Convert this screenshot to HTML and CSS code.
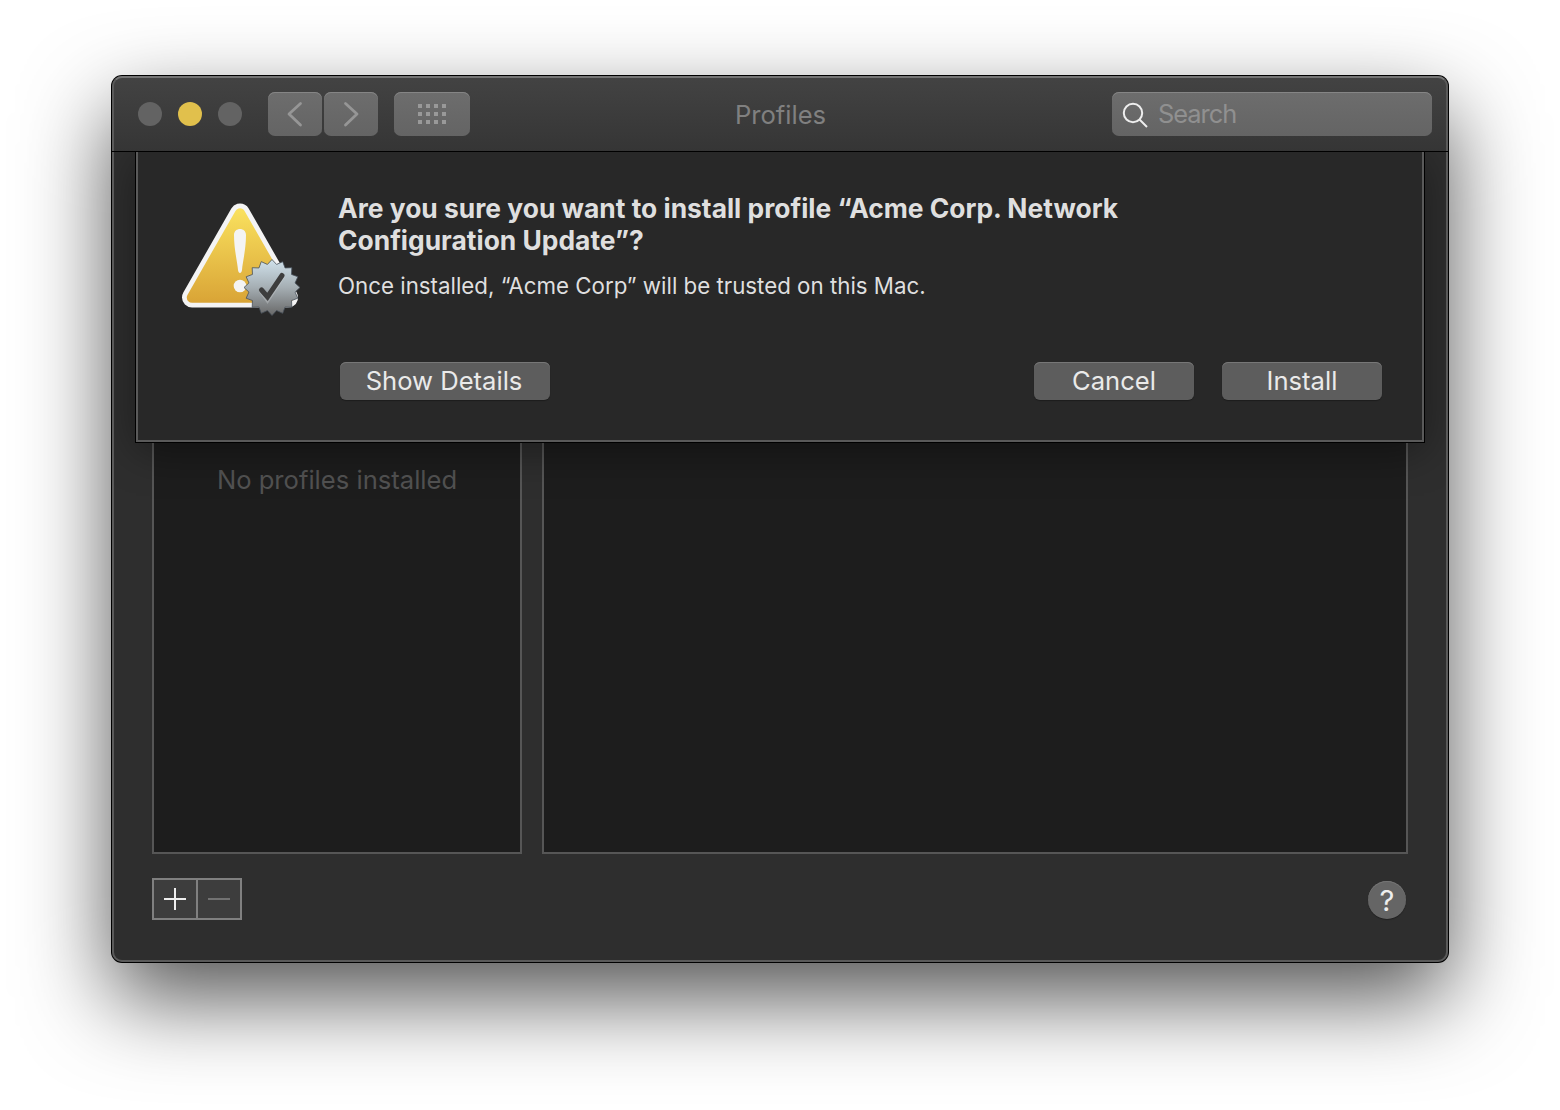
FILE: index.html
```html
<!DOCTYPE html>
<html lang="en">
<head>
<meta charset="utf-8">
<title>Profiles</title>
<link rel="stylesheet" href="styles.css">
</head>
<body>
<main class="window">
  <header class="titlebar">
    <div class="left-tools">
      <div class="lights"><span class="light"></span><span class="light light-yellow"></span><span class="light"></span></div>
      <div class="nav">
        <button class="tool" aria-label="Back"><svg width="54" height="44" viewBox="0 0 54 44"><path d="M32.500 11.500 21 22 32.500 33" /></svg></button>
        <button class="tool" aria-label="Forward"><svg width="54" height="44" viewBox="0 0 54 44"><path d="M21.500 11.500 33 22 21.500 33" /></svg></button>
      </div>
      <button class="tool tool-grid" aria-label="Show all"><span class="dots"><i></i><i></i><i></i><i></i><i></i><i></i><i></i><i></i><i></i><i></i><i></i><i></i></span></button>
    </div>
    <h1 class="title">Profiles</h1>
    <div class="search">
      <svg width="26" height="26" viewBox="0 0 26 26"><circle cx="11" cy="11" r="9.2"/><path d="M17.500 17.500 25 25"/></svg>
      <span class="search-text">Search</span>
    </div>
  </header>
  <div class="content">
    <div class="panels">
      <section class="panel panel-list"><p class="empty">No profiles installed</p></section>
      <section class="panel"></section>
    </div>
    <footer class="footer">
      <div class="segments">
        <button class="segment" aria-label="Add"><svg width="22" height="22" viewBox="0 0 22 22"><path d="M0 11H22M11 0V22"/></svg></button>
        <button class="segment segment-off" aria-label="Remove"><svg width="22" height="22" viewBox="0 0 22 22"><path d="M0 11H22"/></svg></button>
      </div>
      <button class="help">?</button>
    </footer>
    <div class="sheet-clip">
      <section class="sheet" role="dialog">
        <svg class="alert-icon" width="124" height="124" viewBox="0 0 124 124">
          <defs>
            <linearGradient id="gold" gradientUnits="userSpaceOnUse" x1="0" y1="12" x2="0" y2="108"><stop offset="0" stop-color="#fae25f"/><stop offset="1" stop-color="#d9a436"/></linearGradient>
            <linearGradient id="steel" x1="0" y1="0" x2="0" y2="1"><stop offset="0" stop-color="#d0e2ec"/><stop offset=".5" stop-color="#a5aeb3"/><stop offset="1" stop-color="#686868"/></linearGradient>
          </defs>
          <path d="M60 18.500 108 102.500H12Z" fill="#f4f4f4" stroke="#f4f4f4" stroke-width="20" stroke-linejoin="round"/>
          <path d="M60 18.500 108 102.500H12Z" fill="url(#gold)" stroke="url(#gold)" stroke-width="10.500" stroke-linejoin="round"/>
          <path d="M54 40C54 32 66 32 66 40C66 54 62.500 68 62 75C61.500 79 58.500 79 58 75C57.500 68 54 54 54 40Z" fill="#f4f4f4"/>
          <circle cx="60" cy="91" r="6.300" fill="#f4f4f4"/>
          <polygon class="seal" points="" fill="url(#steel)" stroke="#48515a" stroke-width=".8"/>
          <path d="M81.500 95 87.500 103.500 102.500 80.500" transform="translate(0 1)" fill="none" stroke="#d4d8da" stroke-opacity=".35" stroke-width="5" stroke-linecap="round"/>
          <path d="M81.500 95 87.500 102 102 80.500" fill="none" stroke="#3d3d3d" stroke-width="5" stroke-linecap="round"/>
        </svg>
        <div class="message">
          <h2 class="question"><span class="line">Are you sure you want to install profile “Acme Corp. Network</span> <span class="line">Configuration Update”?</span></h2>
          <p class="detail">Once installed, “Acme Corp” will be trusted on this Mac.</p>
          <div class="actions">
            <button class="push push-wide">Show Details</button>
            <button class="push">Cancel</button>
            <button class="push">Install</button>
          </div>
        </div>
      </section>
    </div>
  </div>
</main>
<script src="seal.js"></script>
</body>
</html>
```
FILE: seal.js
```js
// Sixteen-point star outline of the verification seal
const seal = document.querySelector('.seal');
const points = [];
for (let i = 0; i < 32; i++) {
  const radius = i % 2 ? 23.5 : 28;
  const angle = -Math.PI / 2 + i * Math.PI / 16;
  points.push((92 + radius * Math.cos(angle)).toFixed(2) + ',' + (92.5 + radius * Math.sin(angle)).toFixed(2));
}
seal.setAttribute('points', points.join(' '));
```
FILE: styles.css
```css
* { box-sizing: border-box; }
body { margin: 0; height: 1110px; padding: 76px 112px 0; background: #fff; font-family: Inter, sans-serif; overflow: hidden; }
button { font: inherit; border: 0; padding: 0; color: inherit; display: flex; align-items: center; justify-content: center; }
h1, h2, p { margin: 0; font-weight: 400; }
svg { display: block; }

.window { position: relative; width: 1336px; height: 886px; border-radius: 10px; background: #2e2e2e; display: flex; flex-direction: column; box-shadow: 0 0 0 1px #000, 0 36px 88px rgba(0,0,0,.68); }
/* light inner edge of the window, above the title bar and content */
.window::after { content: ""; position: absolute; inset: 0; border: 2px solid #5a5a5a; border-top-color: #757575; border-radius: 10px; pointer-events: none; }
/* separator crosses the inner edge */
.window::before { content: ""; position: absolute; z-index: 1; top: 75px; left: 0; right: 0; height: 1px; background: #000; }

.titlebar { height: 76px; flex: none; display: grid; grid-template-columns: 1fr auto 1fr; align-items: start; padding: 16px 16px 0 26px; background: linear-gradient(#434343, #353535); border-radius: 10px 10px 0 0; }
.left-tools, .lights, .nav { display: flex; align-items: center; }
.lights { gap: 16px; margin-right: 26px; }
.light { width: 24px; height: 24px; border-radius: 50%; background: #636363; }
.light-yellow { background: #e1c04c; }
.nav { gap: 2px; margin-right: 16px; }
.tool, .search { height: 44px; border-radius: 7px; background: linear-gradient(#6d6d6d, #646464); box-shadow: inset 0 1px #858585; }
.tool { width: 54px; }
.tool svg { fill: none; stroke: #969696; stroke-width: 2.8; stroke-linecap: round; stroke-linejoin: round; }
.tool-grid { width: 76px; }
.dots { display: grid; grid-template-columns: repeat(4, 4px); gap: 4px; }
.dots i { width: 4px; height: 4px; background: #999; }
.title { font-size: 25.6px; line-height: 44px; color: #808080; padding-top: 1px; margin-left: -9px; }
.search { justify-self: end; width: 320px; display: flex; align-items: center; padding: 0 10px; gap: 10px; }
.search svg { fill: none; stroke: #eee; stroke-width: 2; margin-top: 2px; }
.search-text { font-size: 25.4px; letter-spacing: -1px; color: #909090; margin-top: -2px; }

.content { position: relative; flex: 1; padding: 26px 40px 42px; display: flex; flex-direction: column; }
.panels { flex: 1; display: grid; grid-template-columns: 370px 1fr; gap: 20px; }
.panel { border: 2px solid #565656; background: #1d1d1d; }
.empty { margin-top: 284px; text-align: center; font-size: 25.6px; line-height: 32px; color: #525252; }
.footer { margin-top: 24px; display: flex; justify-content: space-between; align-items: center; height: 42px; padding-right: 2px; }
.segments { display: flex; gap: 2px; padding: 2px; background: #808080; }
.segment { width: 42px; height: 38px; background: #3d3d3d; color: #eee; }
.segment svg { stroke: currentColor; stroke-width: 2; }
.segment-off { color: #727272; }
.help { width: 38px; height: 38px; margin-top: 2px; border-radius: 50%; background: #656565; color: #eee; font-size: 29px; box-shadow: inset 0 1px #757575, 0 1px 1px rgba(0,0,0,.3); }

/* clip hides the part of the sheet's shadow that would fall on the title bar */
.sheet-clip { position: absolute; top: 0; left: 2px; right: 2px; height: 350px; padding: 0 22px; overflow: hidden; }
.sheet { height: 290px; border: 2px solid #5a5a5a; border-top: 0; background: #282828; box-shadow: 0 0 0 1px #000, 0 8px 40px rgba(0,0,0,.4); display: flex; padding: 40px 40px 0; }
.alert-icon { margin: 3px 34px 0 2px; flex: none; }
.message { flex: 1; color: #dfdfdf; }
.question { font-size: 26.4px; line-height: 32px; font-weight: 700; }
.line { display: block; white-space: nowrap; }
.detail { margin-top: 14px; font-size: 22.3px; line-height: 32px; white-space: nowrap; }
.actions { display: flex; gap: 28px; margin-top: 60px; padding-left: 2px; }
.push { width: 160px; height: 38px; padding-bottom: 2px; border-radius: 6px; background: #5d5d5d; color: #eaeaea; font-size: 25.6px; box-shadow: inset 0 1px #777, 0 1px 1px rgba(0,0,0,.3); }
.push-wide { width: 210px; padding-right: 2px; margin-right: auto; }
```
